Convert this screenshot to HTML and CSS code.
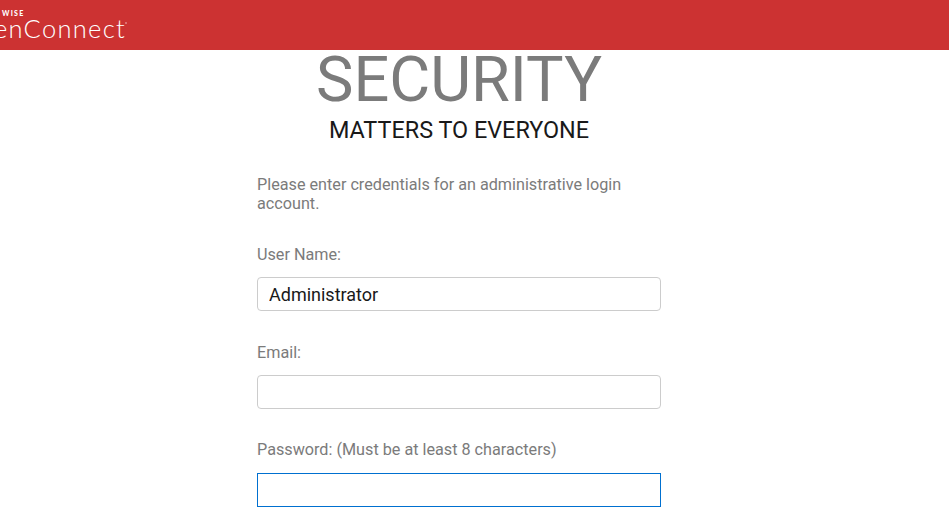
FILE: index.html
```html
<!DOCTYPE html>
<html lang="en">
<head>
<meta charset="utf-8">
<title>ScreenConnect</title>
<link rel="stylesheet" href="styles.css">
</head>
<body>
<header class="header">
  <div class="brand">
    <span class="brand-top">WISE</span>
    <span class="brand-name">enConnect<span class="mark"></span></span>
  </div>
</header>
<main class="setup">
  <h1 class="title">SECURITY</h1>
  <h2 class="subtitle">MATTERS TO EVERYONE</h2>
  <p class="intro">Please enter credentials for an administrative login account.</p>
  <div class="field">
    <label class="label" for="user">User Name:</label>
    <input class="input" id="user" type="text" value="Administrator">
  </div>
  <div class="field">
    <label class="label" for="email">Email:</label>
    <input class="input" id="email" type="text">
  </div>
  <div class="field">
    <label class="label" for="password">Password: (Must be at least 8 characters)</label>
    <input class="input input-active" id="password" type="password">
  </div>
</main>
</body>
</html>
```

FILE: styles.css
```css
* { box-sizing: border-box; }
body {
  margin: 0;
  height: 523px;
  overflow: hidden;
  background: #fff;
  color: #7b7b7b;
  font-family: Roboto, sans-serif;
  font-size: 18px;
}
.header {
  height: 50px;
  background: #cc3232;
  overflow: hidden;
}
.brand {
  display: flex;
  flex-direction: column;
  color: #fff;
  font-family: Lato, sans-serif;
  padding-top: 8px;
}
.brand-top {
  margin-left: 2px;
  font-size: 7px;
  line-height: 10px;
  font-weight: 900;
  letter-spacing: 1.3px;
}
.brand-name {
  margin: 0 0 0 -6px;
  font-size: 25.5px;
  line-height: 20px;
  font-weight: 300;
  letter-spacing: 1.3px;
  white-space: nowrap;
}
.mark {
  display: inline-block;
  width: 2px;
  height: 2px;
  margin-left: -1px;
  vertical-align: 14px;
  background: #dc7071;
}
.setup { width: 404px; margin-left: 257px; }
.title {
  margin: 0;
  height: 66px;
  font-size: 63px;
  line-height: 60px;
  font-weight: 400;
  text-align: center;
  color: #7b7b7b;
}
.subtitle {
  margin: 0;
  font-size: 23.4px;
  line-height: 28px;
  font-weight: 400;
  text-align: center;
  color: #191919;
}
.intro { margin: 31px 0 32px; font-size: 16.2px; line-height: 19px; }
.field { height: 97.7px; }
.label { display: block; font-size: 16.2px; line-height: 19px; margin-bottom: 13.3px; }
.input {
  display: block;
  width: 404px;
  height: 34px;
  padding: 0 11px;
  border: 1px solid #ccc;
  border-radius: 4px;
  background: #fff;
  color: #191919;
  font: 18px Roboto, sans-serif;
  outline: none;
}
.input-active { border-color: #0070d0; border-radius: 0; }
```
